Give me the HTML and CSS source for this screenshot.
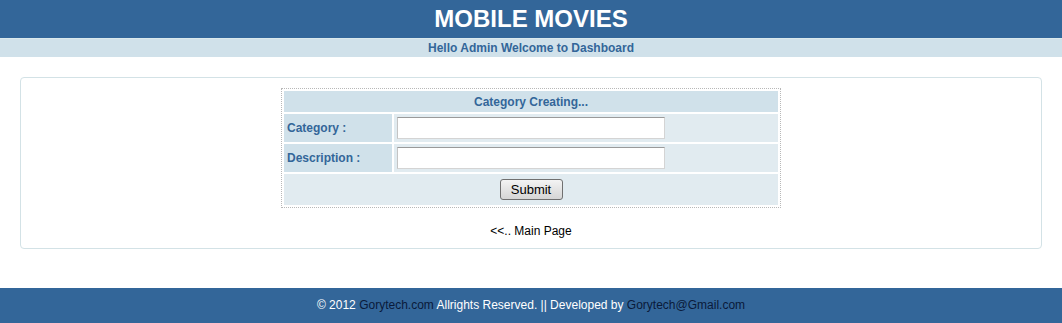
FILE: index.html
```html
<!DOCTYPE html>
<html lang="en">
<head>
  <meta charset="UTF-8">
  <title>Mobile Movies - Category</title>
  <link rel="stylesheet" href="styles.css">
</head>
<body>
  <div class="header">MOBILE MOVIES</div>
  <div class="welcome">Hello Admin Welcome to Dashboard</div>

  <div class="content">
    <form class="cat-form">
      <table class="form-table">
        <tr>
          <th colspan="2">Category Creating...</th>
        </tr>
        <tr>
          <td class="label">Category :</td>
          <td class="field"><input type="text" name="category"></td>
        </tr>
        <tr>
          <td class="label">Description :</td>
          <td class="field"><input type="text" name="description"></td>
        </tr>
        <tr>
          <td colspan="2" class="submit-row"><button type="button">Submit</button></td>
        </tr>
      </table>
    </form>
    <p class="back"><a href="#">&lt;&lt;.. Main Page</a></p>
  </div>

  <div class="footer">
    &copy; 2012 <a href="#">Gorytech.com</a> Allrights Reserved. || Developed by <a href="#">Gorytech@Gmail.com</a>
  </div>
</body>
</html>
```

FILE: styles.css
```css
:root {
  --dark-blue: #336699;
  --light-blue: #d0e1ea;
  --pale-blue: #e1ebf0;
}

body {
  margin: 0;
  font-family: "Liberation Sans", Arial, sans-serif;
  font-size: 12px;
  background-color: #fff;
}

.header {
  height: 38px;
  line-height: 38px;
  background-color: var(--dark-blue);
  color: #fff;
  font-size: 24px;
  font-weight: bold;
  text-align: center;
}

.welcome {
  height: 19px;
  line-height: 19px;
  background-color: var(--light-blue);
  border-top: 1px solid #dbe9ec;
  box-sizing: border-box;
  color: var(--dark-blue);
  font-weight: bold;
  text-align: center;
}

.content {
  margin: 20px 20px 39px;
  padding: 10px 0 10px;
  border: 1px solid #d3e2e6;
  border-radius: 4px;
}

.form-table {
  width: 500px;
  margin: 0 auto;
  border: 1px dotted #b8b8b8;
  border-spacing: 2px;
}

.form-table th {
  height: 21px;
  padding: 0;
  background-color: var(--light-blue);
  color: var(--dark-blue);
  font-size: 12px;
  text-align: center;
}

.form-table td {
  padding: 0;
}

.label {
  width: 105px;
  height: 28px;
  padding-left: 3px !important;
  background-color: var(--light-blue);
  color: var(--dark-blue);
  font-weight: bold;
}

.field {
  background-color: var(--pale-blue);
  padding-left: 3px !important;
}

.field input {
  display: block;
  width: 268px;
  height: 22px;
  box-sizing: border-box;
  border: 1px solid #d4d4d4;
  border-top-color: #9a9a9a;
  border-left-color: #c4c4c4;
  background-color: #fff;
}

.submit-row {
  height: 31px;
  background-color: var(--pale-blue);
  text-align: center;
}

.submit-row button {
  width: 63px;
  height: 21px;
  padding: 0;
  font-family: "Liberation Sans", Arial, sans-serif;
  font-size: 13px;
  color: #000;
  border: 1px solid #707070;
  border-radius: 3px;
  background: linear-gradient(#f4f4f4, #e4e4e4 50%, #d6d6d6);
}

.back {
  margin: 16px 0 0;
  text-align: center;
}

.back a {
  color: #000;
  text-decoration: none;
}

.footer {
  height: 35px;
  line-height: 35px;
  background-color: var(--dark-blue);
  color: #fff;
  text-align: center;
}

.footer a {
  color: #0a1a3a;
  text-decoration: none;
}
```
